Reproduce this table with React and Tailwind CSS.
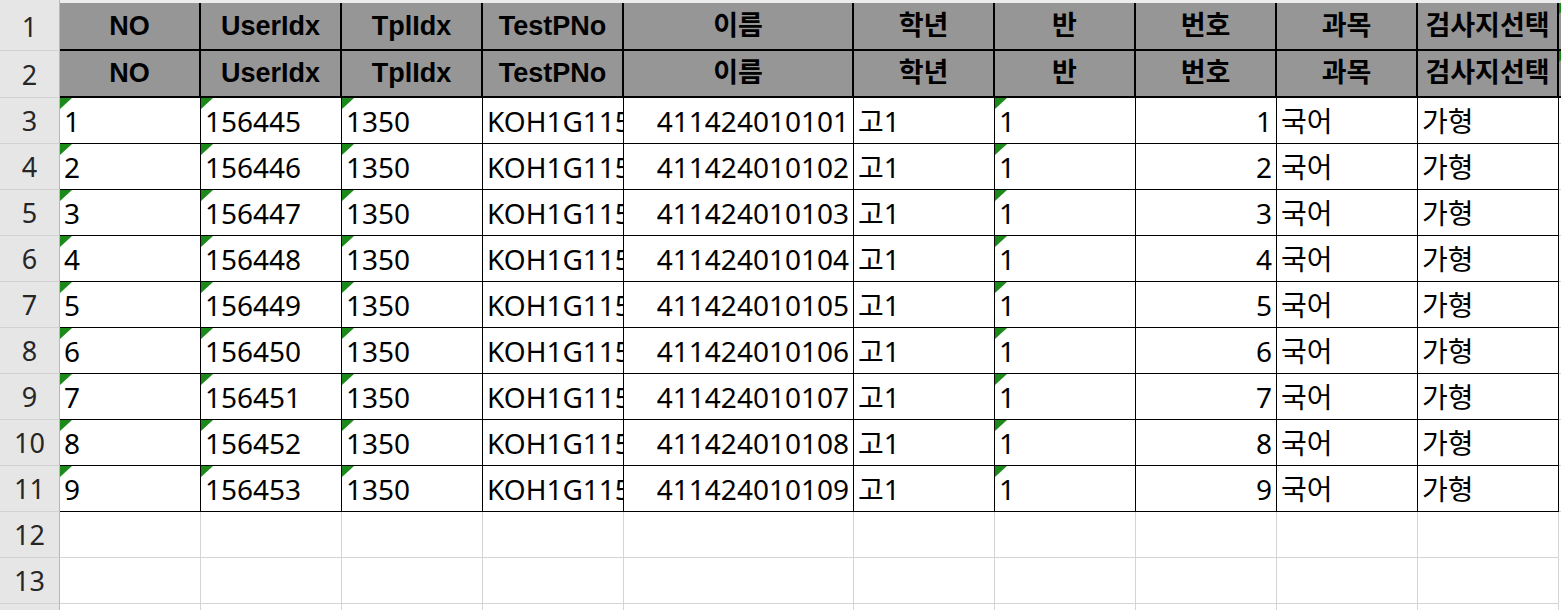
import React from "react"

const columns = [
  { key: "no", title: "NO", width: "w-[141px]", align: "text-left", mark: true },
  { key: "user", title: "UserIdx", width: "w-[141px]", align: "text-left", mark: true },
  { key: "tpl", title: "TplIdx", width: "w-[141px]", align: "text-left", mark: true },
  { key: "test", title: "TestPNo", width: "w-[141px]", align: "text-left" },
  { key: "name", title: "이름", width: "w-[230px]", align: "text-right" },
  { key: "grade", title: "학년", width: "w-[141px]", align: "text-left" },
  { key: "cls", title: "반", width: "w-[141px]", align: "text-left", mark: true },
  { key: "num", title: "번호", width: "w-[141px]", align: "text-right" },
  { key: "subject", title: "과목", width: "w-[141px]", align: "text-left" },
  { key: "paper", title: "검사지선택", width: "w-[141px]", align: "text-left" },
]

const rows = Array.from({ length: 9 }, (_, i) => ({
  no: String(i + 1),
  user: String(156445 + i),
  tpl: "1350",
  test: "KOH1G115",
  name: "41142401010" + (i + 1),
  grade: "고1",
  cls: "1",
  num: String(i + 1),
  subject: "국어",
  paper: "가형",
}))

const font = "font-['Noto_Sans','Noto_Sans_CJK_KR',sans-serif]"
const headFont = "font-['Liberation_Sans','Noto_Sans_CJK_KR',sans-serif]"

function Mark() {
  return <div className="absolute left-0 top-0 w-[12px] h-[11px] bg-[#1b8a1b] [clip-path:polygon(0_0,100%_0,0_100%)]" />
}

function RowHead({ n, h = "h-[46px]" }) {
  return (
    <div className={`w-[60px] shrink-0 ${h} bg-[#e6e6e6] border-r border-b border-r-[#b8b8b8] border-b-[#d2d2d2] flex items-center justify-center pt-[2px] text-[27px] text-[#262626]`}>
      {n}
    </div>
  )
}

function HeaderRow({ n, h }) {
  return (
    <div className="flex">
      <RowHead n={n} h={h} />
      {columns.map(c => (
        <div key={c.key} className={`${c.width} shrink-0 ${h} bg-[#969696] border-r-2 border-b-2 border-black flex items-center justify-center overflow-hidden whitespace-nowrap ${headFont} font-bold text-[27px] text-black`}>
          {c.title}
        </div>
      ))}
      <div className={`relative w-[3px] shrink-0 ${h} bg-[#969696] border-b-2 border-black`}>
        <Mark />
      </div>
    </div>
  )
}

export default function App() {
  return (
    <div className={`w-[1561px] h-[610px] overflow-hidden bg-white ${font}`}>
      <div className="h-[3px] flex">
        <div className="w-[60px] bg-[#e6e6e6] border-r border-[#b8b8b8]" />
        <div className="flex-1 bg-[#ececec]" />
      </div>
      <HeaderRow n="1" h="h-[48px]" />
      <HeaderRow n="2" h="h-[47px]" />
      {rows.map((r, i) => (
        <div key={i} className="flex">
          <RowHead n={i + 3} />
          {columns.map(c => (
            <div key={c.key} className={`relative ${c.width} shrink-0 h-[46px] border-r border-b border-black flex items-center overflow-hidden text-[28px] text-black`}>
              {c.mark && <Mark />}
              <span className={`block w-full px-[4px] overflow-hidden whitespace-nowrap ${c.align}`}>{r[c.key]}</span>
            </div>
          ))}
          <div className="w-[3px] shrink-0 h-[46px] border-b border-[#d4d4d4]" />
        </div>
      ))}
      {[12, 13, 14].map(n => (
        <div key={n} className="flex">
          <RowHead n={n} />
          {columns.map(c => (
            <div key={c.key} className={`${c.width} shrink-0 h-[46px] border-r border-b border-[#d4d4d4]`} />
          ))}
        </div>
      ))}
    </div>
  )
}
